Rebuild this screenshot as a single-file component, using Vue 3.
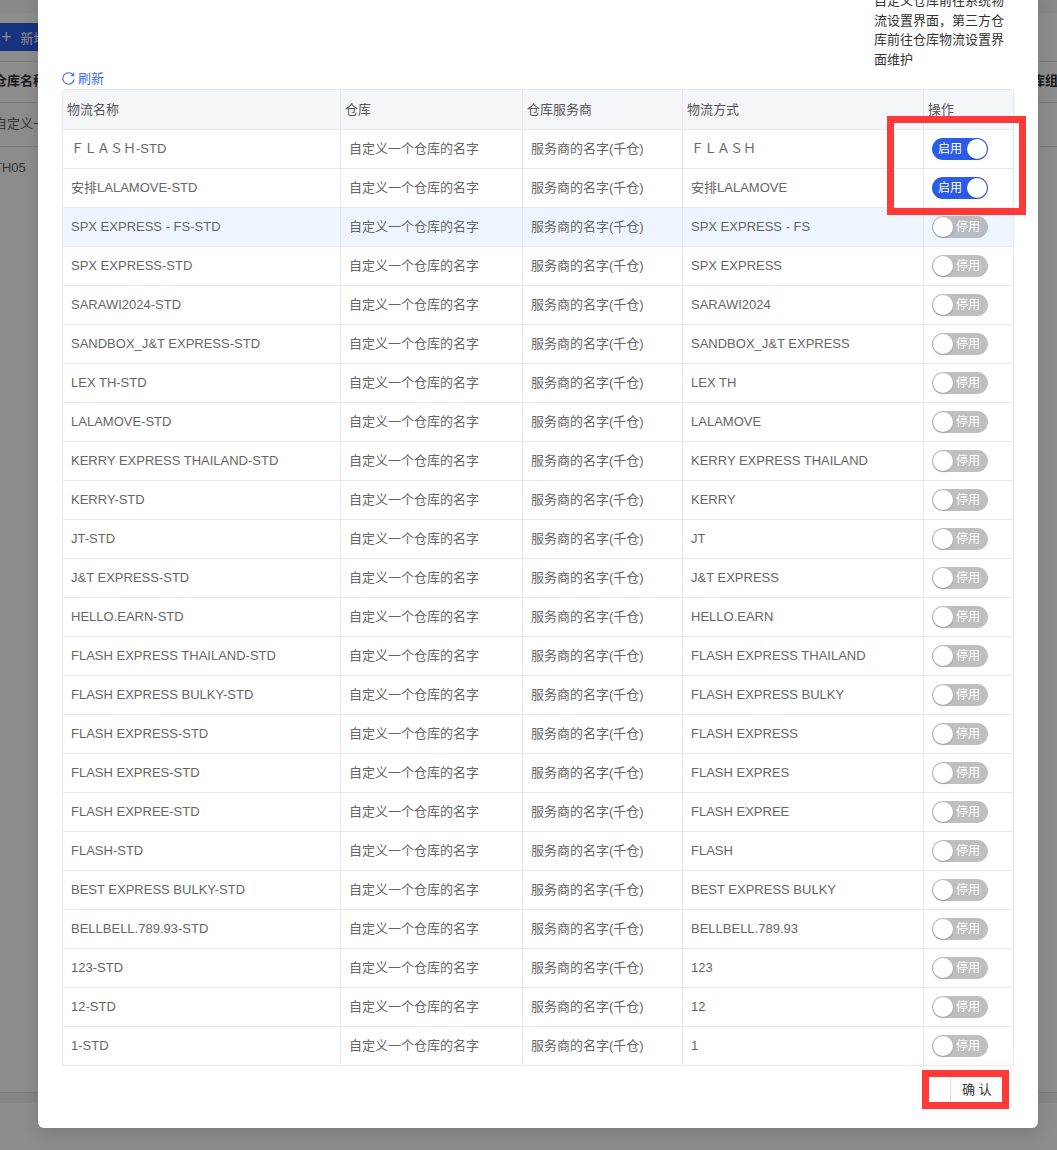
<script setup>
const names = ['ＦＬＡＳＨ','安排LALAMOVE','SPX EXPRESS - FS','SPX EXPRESS','SARAWI2024','SANDBOX_J&T EXPRESS','LEX TH','LALAMOVE','KERRY EXPRESS THAILAND','KERRY','JT','J&T EXPRESS','HELLO.EARN','FLASH EXPRESS THAILAND','FLASH EXPRESS BULKY','FLASH EXPRESS','FLASH EXPRES','FLASH EXPREE','FLASH','BEST EXPRESS BULKY','BELLBELL.789.93','123','12','1']
const rows = names.map((n, i) => ({
  id: i,
  way: n,
  name: n + '-STD',
  on: i < 2,
  hover: i === 2,
}))
</script>

<template>
  <div class="page">
    <div class="bg">
      <div class="bg-top"></div>
      <div class="bg-btn"><span class="plus">+</span><span>新增</span></div>
      <div class="bg-row bg-head"><span class="shift">仓库名称</span><span class="right">库组</span></div>
      <div class="bg-row tall"><span class="shift">自定义一个仓库的名字</span></div>
      <div class="bg-row tall plain"><span class="shift">TH05</span></div>
      <div class="bg-foot"></div>
    </div>
    <div class="overlay"></div>
    <div class="modal-wrap">
      <div class="modal">
        <div class="notice-row">
          <p class="notice">自定义仓库前往系统物流设置界面，第三方仓库前往仓库物流设置界面维护</p>
        </div>
        <div class="refresh">
          <svg width="13" height="13" viewBox="0 0 13 13" fill="none" stroke="#3b6cf0" stroke-width="1.1"><path d="M11.4 3.4A5.7 5.7 0 1 0 12.2 7.4" /><path d="M11.6 0.8v2.9H8.8" /></svg>
          <span class="refresh-text">刷新</span>
        </div>
        <div class="table">
          <div class="tr head">
            <div class="c c1">物流名称</div>
            <div class="c c2">仓库</div>
            <div class="c c3">仓库服务商</div>
            <div class="c c4">物流方式</div>
            <div class="c c5">操作</div>
          </div>
          <div v-for="r in rows" :key="r.id" class="tr body" :class="{ hover: r.hover }">
            <div class="c c1">{{ r.name }}</div>
            <div class="c c2">自定义一个仓库的名字</div>
            <div class="c c3">服务商的名字(千仓)</div>
            <div class="c c4">{{ r.way }}</div>
            <div class="c c5">
              <div class="switch" :class="{ on: r.on }">
                <span class="knob"></span>
                <span class="label">{{ r.on ? '启用' : '停用' }}</span>
              </div>
            </div>
          </div>
        </div>
        <div class="footer">
          <div class="confirm"><span class="blank"></span><span class="ok">确 认</span></div>
        </div>
      </div>
    </div>
    <div class="mark mark-a"></div>
    <div class="mark mark-b"></div>
  </div>
</template>

<style scoped>
.page { position: relative; width: 1057px; height: 1150px; overflow: hidden; background: #fff; font-family: "Liberation Sans", "Noto Sans CJK SC", sans-serif; font-size: 13px; color: #333; }
.bg { display: flex; flex-direction: column; height: 100%; }
.bg-top { height: 13px; background: #f7f7f7; flex: none; }
.bg-btn { margin-top: 10px; width: 60px; height: 28px; background: #2b5ce6; color: #fff; display: flex; align-items: center; gap: 9px; padding-left: 1px; flex: none; }
.plus { font-size: 18px; font-weight: 300; }
.bg-row { height: 41px; flex: none; box-sizing: border-box; border-bottom: 1px solid #ddd; padding-bottom: 2px; display: flex; align-items: center; justify-content: space-between; white-space: nowrap; color: #666; overflow: hidden; line-height: 16px; }
.bg-head { margin-top: 10px; border-top: 1px solid #ddd; height: 42px; font-weight: 700; color: #333; padding-bottom: 3px; }
.tall { height: 44px; }
.plain { border-bottom: 0; }
.shift { margin-left: -6px; }
.right { margin-right: -1px; }
.bg-foot { margin-top: auto; margin-bottom: 47px; height: 10px; border-top: 1px solid #ddd; background: #f5f5f5; flex: none; }
.overlay { position: absolute; inset: 0; background: rgba(0, 0, 0, 0.45); }
.modal-wrap { position: absolute; inset: 0; display: flex; justify-content: center; align-items: flex-end; padding-bottom: 22px; }
.modal { width: 1000px; box-sizing: border-box; padding: 0 24px 26px; background: #fff; border-radius: 0 0 6px 6px; box-shadow: 0 6px 16px rgba(0, 0, 0, 0.12); flex: none; margin-left: 19px; }
.notice-row { display: flex; justify-content: flex-end; }
.notice { width: 132px; margin: 0 8px 0 0; font-size: 13px; line-height: 19.5px; color: #333; }
.refresh { display: flex; align-items: center; gap: 3px; height: 20px; color: #3b6cf0; font-size: 13px; padding-bottom: 1px; box-sizing: border-box; }
.refresh-text { line-height: 16px; }
.table { width: 952px; border: 1px solid #e8e8e8; border-bottom: 0; border-radius: 4px 4px 0 0; box-sizing: border-box; }
.tr { display: flex; border-bottom: 1px solid #e8e8e8; box-sizing: border-box; }
.head { height: 40px; background: #f5f6fa; color: #555; }
.body { height: 39px; color: #666; }
.hover { background: #eff5fe; }
.c { display: flex; align-items: center; padding: 0 0 0 8px; line-height: 16px; box-sizing: border-box; border-right: 1px solid #e8e8e8; white-space: nowrap; flex: none; }
.head .c { padding-left: 4px; }
.c1 { width: 278px; }
.c2 { width: 182px; }
.c3 { width: 160px; }
.c4 { width: 241px; }
.c5 { flex: 1; border-right: 0; }
.switch { width: 56px; height: 22px; border-radius: 11px; background: #bfbfbf; position: relative; display: flex; align-items: center; justify-content: flex-end; color: #fff; font-size: 12px; padding: 0 8px 0 6px; box-sizing: border-box; }
.switch.on { background: #2b5ce6; justify-content: flex-start; }
.hover .switch { background: #b8bbc0; }
.knob { position: absolute; left: 1px; top: 1px; width: 20px; height: 20px; border-radius: 50%; background: #fff; box-shadow: 0 1px 2px rgba(0, 0, 0, 0.2); }
.on .knob { left: 35px; }
.footer { display: flex; justify-content: flex-end; margin-top: 11px; padding-right: 12px; }
.confirm { width: 73px; height: 25px; display: flex; align-items: center; font-size: 13px; color: #333; }
.blank { width: 21px; height: 100%; border-right: 1px solid #ddd; box-sizing: content-box; flex: none; }
.ok { margin-left: 11px; line-height: 16px; }
.mark { position: absolute; border: 7px solid #ff3838; box-sizing: border-box; }
.mark-a { left: 887px; top: 116px; width: 139px; height: 99px; }
.mark-b { left: 922px; top: 1070px; width: 87px; height: 39px; }
</style>
